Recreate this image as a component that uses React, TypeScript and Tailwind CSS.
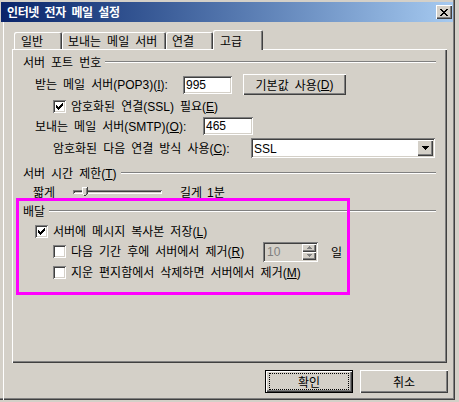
import React from "react";

const RAISED =
  "shadow-[inset_1px_1px_0_0_#ffffff,inset_-1px_-1px_0_0_#404040,inset_-2px_-2px_0_0_#808080]";
const SUNKEN =
  "shadow-[inset_1px_1px_0_0_#808080,inset_-1px_-1px_0_0_#ffffff,inset_2px_2px_0_0_#404040,inset_-2px_-2px_0_0_#d4d0c8]";
const TAB =
  "shadow-[inset_1px_1px_0_0_#ffffff,inset_-1px_0_0_0_#404040,inset_-2px_0_0_0_#808080]";

function L({ children }: { children: React.ReactNode }) {
  return <span className="font-['Liberation_Sans','Arial',sans-serif]">{children}</span>;
}

function Check({ checked }: { checked?: boolean }) {
  return (
    <div className={`relative w-[13px] h-[13px] shrink-0 bg-white ${SUNKEN}`}>
      {checked && (
        <svg
          width="13"
          height="13"
          shapeRendering="crispEdges"
          className="absolute left-0 top-0"
        >
          <rect x="9" y="3" width="1" height="1" fill="#000" />
          <rect x="8" y="4" width="2" height="1" fill="#000" />
          <rect x="3" y="5" width="1" height="1" fill="#000" />
          <rect x="7" y="5" width="3" height="1" fill="#000" />
          <rect x="3" y="6" width="2" height="1" fill="#000" />
          <rect x="6" y="6" width="3" height="1" fill="#000" />
          <rect x="3" y="7" width="5" height="1" fill="#000" />
          <rect x="4" y="8" width="3" height="1" fill="#000" />
          <rect x="5" y="9" width="1" height="1" fill="#000" />
        </svg>
      )}
    </div>
  );
}

function GroupHeader({ children }: { children: React.ReactNode }) {
  return (
    <div className="flex h-[20px] items-center">
      <span className="whitespace-nowrap leading-[14px]">{children}</span>
      <div className="ml-[4px] h-[2px] flex-1 border-t border-b border-t-[#808080] border-b-white" />
    </div>
  );
}

function CloseX() {
  const rows: [number, number][][] = [
    [[0, 2], [6, 2]],
    [[1, 2], [5, 2]],
    [[2, 4]],
    [[3, 2]],
    [[2, 4]],
    [[1, 2], [5, 2]],
    [[0, 2], [6, 2]],
  ];
  return (
    <svg width="8" height="7" shapeRendering="crispEdges">
      {rows.map((r, y) =>
        r.map(([x, w], i) => (
          <rect key={`${y}-${i}`} x={x} y={y} width={w} height="1" fill="#000" />
        ))
      )}
    </svg>
  );
}

function DownArrow({ color = "#000", big = true }: { color?: string; big?: boolean }) {
  if (big) {
    return (
      <svg width="7" height="4" shapeRendering="crispEdges">
        <rect x="0" y="0" width="7" height="1" fill={color} />
        <rect x="1" y="1" width="5" height="1" fill={color} />
        <rect x="2" y="2" width="3" height="1" fill={color} />
        <rect x="3" y="3" width="1" height="1" fill={color} />
      </svg>
    );
  }
  return (
    <svg width="5" height="3" shapeRendering="crispEdges">
      <rect x="0" y="0" width="5" height="1" fill={color} />
      <rect x="1" y="1" width="3" height="1" fill={color} />
      <rect x="2" y="2" width="1" height="1" fill={color} />
    </svg>
  );
}

function UpArrowSmall({ color = "#808080" }: { color?: string }) {
  return (
    <svg width="5" height="3" shapeRendering="crispEdges">
      <rect x="2" y="0" width="1" height="1" fill={color} />
      <rect x="1" y="1" width="3" height="1" fill={color} />
      <rect x="0" y="2" width="5" height="1" fill={color} />
    </svg>
  );
}

function Thumb() {
  return (
    <svg width="6" height="9" shapeRendering="crispEdges" className="absolute left-[9px] top-[-3px]">
      <path d="M0 0H6V7L4 9H2L0 7Z" fill="#d4d0c8" />
      <rect x="0" y="0" width="5" height="1" fill="#fff" />
      <rect x="0" y="0" width="1" height="7" fill="#fff" />
      <rect x="5" y="0" width="1" height="7" fill="#404040" />
      <rect x="4" y="1" width="1" height="6" fill="#808080" />
      <rect x="1" y="7" width="1" height="1" fill="#fff" />
      <rect x="4" y="7" width="1" height="1" fill="#404040" />
      <rect x="2" y="8" width="2" height="1" fill="#404040" />
    </svg>
  );
}

export default function App() {
  return (
    <div className="relative w-[459px] h-[402px] overflow-hidden bg-[#d4d0c8] text-[12px] leading-[14px] text-black font-['Noto_Sans_Mono_CJK_KR','Noto_Sans_CJK_KR',sans-serif]">
      <div className="flex w-[455px] h-[400px] flex-col shadow-[inset_-1px_-1px_0_0_#404040,inset_-2px_-2px_0_0_#808080]">
        {/* Title bar */}
        <div className="mt-[2px] ml-[1px] flex h-[20px] w-[452px] items-center bg-linear-to-r from-[#0a246a] to-[#a6caf0] pl-[6px]">
          <span className="flex-1 font-bold tracking-[-0.4px] text-white">인터넷 전자 메일 설정</span>
          <div className={`mr-[1px] flex h-[14px] w-[16px] items-center justify-center bg-[#d4d0c8] ${RAISED}`}>
            <CloseX />
          </div>
        </div>

        {/* Body */}
        <div className="ml-[3px] flex flex-1 flex-col border-l border-white">
          {/* Tabs */}
          <div className="mt-[8px] flex h-[19px] pl-[10px]">
            <div className={`mt-[2px] flex h-[17px] w-[48px] items-center rounded-t-[2px] pl-[7px] pt-[1px] ${TAB}`}>
              일반
            </div>
            <div className={`mt-[2px] flex h-[17px] w-[104px] items-center rounded-t-[2px] pl-[6px] pt-[1px] ${TAB}`}>
              보내는 메일 서버
            </div>
            <div className={`mt-[2px] flex h-[17px] w-[47px] items-center rounded-t-[2px] pl-[6px] pt-[1px] ${TAB}`}>
              연결
            </div>
            <div className={`relative z-10 flex h-[20px] w-[50px] items-center rounded-t-[2px] bg-[#d4d0c8] pl-[7px] pt-[2px] ${TAB}`}>
              고급
            </div>
          </div>

          {/* Panel */}
          <div className={`ml-[8px] flex h-[314px] w-[435px] flex-col px-[11px] pt-[3px] ${RAISED}`}>
            <GroupHeader>서버 포트 번호</GroupHeader>

            <div className="mt-[2px] flex h-[21px] items-center pl-[12px]">
              <span className="w-[148px] whitespace-nowrap">
                받는 메일 서버<L>(POP3)(<u>I</u>):</L>
              </span>
              <div className={`flex h-[18px] w-[49px] items-center bg-white pl-[3px] ${SUNKEN}`}>
                <L>995</L>
              </div>
              <div className={`ml-[11px] flex h-[21px] w-[103px] items-center justify-center bg-[#d4d0c8] ${RAISED}`}>
                기본값 사용<L>(<u>D</u>)</L>
              </div>
            </div>

            <div className="flex h-[22px] items-center pl-[30px]">
              <Check checked />
              <span className="ml-[5px] whitespace-nowrap">
                암호화된 연결<L>(SSL)</L> 필요<L>(<u>E</u>)</L>
              </span>
            </div>

            <div className="flex h-[18px] items-center pl-[12px]">
              <span className="w-[168px] whitespace-nowrap">
                보내는 메일 서버<L>(SMTP)(<u>O</u>):</L>
              </span>
              <div className={`flex h-[18px] w-[50px] items-center bg-white pl-[3px] ${SUNKEN}`}>
                <L>465</L>
              </div>
            </div>

            <div className="mt-[2px] flex h-[22px] items-center pl-[30px]">
              <span className="w-[198px] whitespace-nowrap">
                암호화된 다음 연결 방식 사용<L>(<u>C</u>):</L>
              </span>
              <div className={`flex h-[20px] w-[184px] items-center bg-white pl-[3px] ${SUNKEN}`}>
                <span className="flex-1">
                  <L>SSL</L>
                </span>
                <div className={`mr-[2px] flex h-[16px] w-[16px] items-center justify-center bg-[#d4d0c8] ${RAISED}`}>
                  <DownArrow />
                </div>
              </div>
            </div>

            <div className="mt-[4px]">
              <GroupHeader>
                서버 시간 제한<L>(<u>T</u>)</L>
              </GroupHeader>
            </div>

            <div className="flex h-[18px] items-center pl-[10px]">
              <span className="w-[40px] whitespace-nowrap">짧게</span>
              <div className={`relative h-[4px] w-[89px] ${SUNKEN}`}>
                <Thumb />
              </div>
              <span className="ml-[18px] whitespace-nowrap">길게</span>
              <span className="ml-[5px] whitespace-nowrap">
                <L>1</L>분
              </span>
            </div>

            <GroupHeader>배달</GroupHeader>

            <div className="flex h-[20px] items-center pl-[12px]">
              <Check checked />
              <span className="ml-[5px] whitespace-nowrap">
                서버에 메시지 복사본 저장<L>(<u>L</u>)</L>
              </span>
            </div>

            <div className="flex h-[21px] items-center pl-[30px]">
              <div className="flex w-[210px] items-center">
                <Check />
                <span className="ml-[5px] whitespace-nowrap">
                  다음 기간 후에 서버에서 제거<L>(<u>R</u>)</L>
                </span>
              </div>
              <div className={`flex h-[20px] w-[55px] items-stretch bg-[#d4d0c8] p-[2px] ${SUNKEN}`}>
                <span className="flex flex-1 items-center pl-[2px] text-[#808080]">
                  <L>10</L>
                </span>
                <div className="flex w-[14px] flex-col">
                  <div className={`flex flex-1 items-center justify-center ${RAISED}`}>
                    <UpArrowSmall />
                  </div>
                  <div className={`flex flex-1 items-center justify-center ${RAISED}`}>
                    <DownArrow big={false} color="#808080" />
                  </div>
                </div>
              </div>
              <span className="ml-[13px]">일</span>
            </div>

            <div className="flex h-[20px] items-center pl-[30px]">
              <Check />
              <span className="ml-[5px] whitespace-nowrap">
                지운 편지함에서 삭제하면 서버에서 제거<L>(<u>M</u>)</L>
              </span>
            </div>
          </div>

          {/* Buttons */}
          <div className="mt-[7px] flex gap-[7px] pl-[261px]">
            <div className={`h-[23px] w-[88px] border border-black bg-[#d4d0c8] px-[3px] py-[2px] ${RAISED}`}>
              <div className="flex h-full w-full items-center justify-center border border-dotted border-black">
                확인
              </div>
            </div>
            <div className={`flex h-[23px] w-[88px] items-center justify-center bg-[#d4d0c8] ${RAISED}`}>
              취소
            </div>
          </div>
        </div>
      </div>

      {/* Annotation overlay */}
      <div className="absolute left-[16px] top-[198px] h-[97px] w-[334px] border-[3px] border-[#ff00ff]" />
    </div>
  );
}
